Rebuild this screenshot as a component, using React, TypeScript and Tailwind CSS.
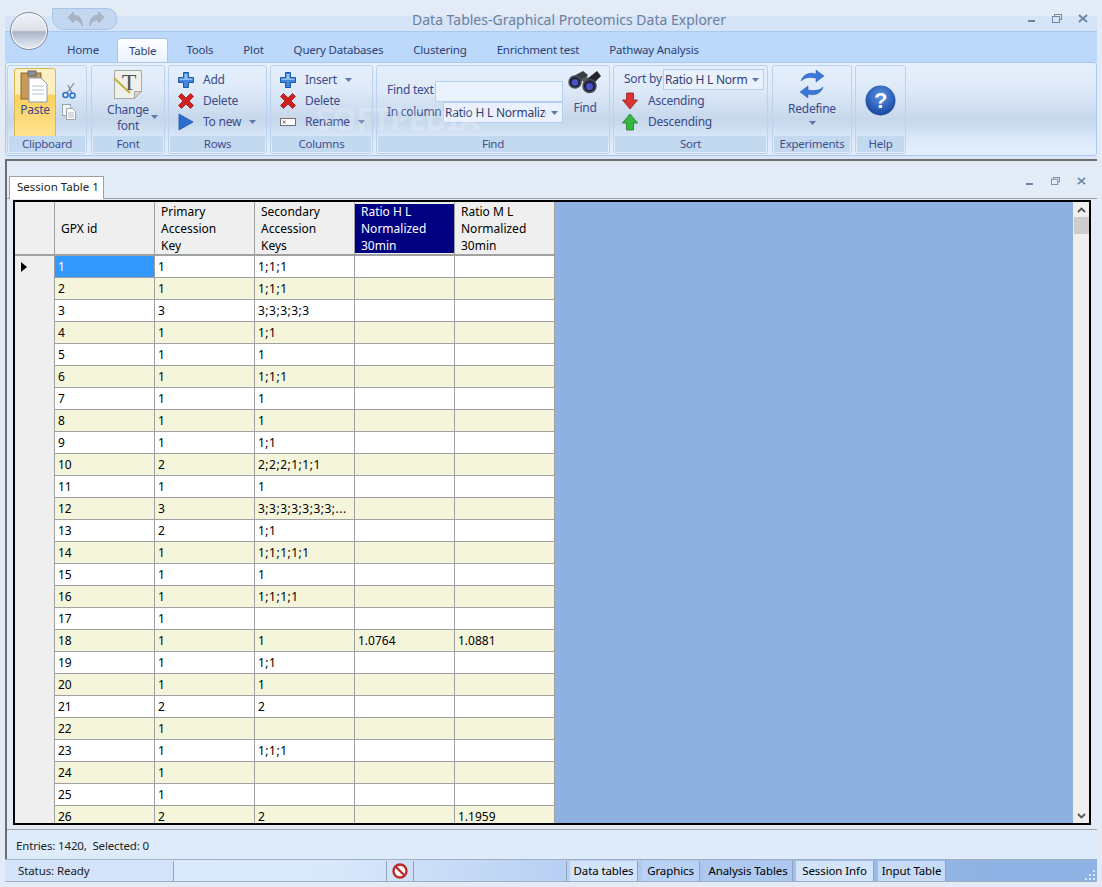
import React from "react";

const rows: [string, string, string, string, string][] = [
  ["1", "1", "1;1;1", "", ""],
  ["2", "1", "1;1;1", "", ""],
  ["3", "3", "3;3;3;3;3", "", ""],
  ["4", "1", "1;1", "", ""],
  ["5", "1", "1", "", ""],
  ["6", "1", "1;1;1", "", ""],
  ["7", "1", "1", "", ""],
  ["8", "1", "1", "", ""],
  ["9", "1", "1;1", "", ""],
  ["10", "2", "2;2;2;1;1;1", "", ""],
  ["11", "1", "1", "", ""],
  ["12", "3", "3;3;3;3;3;3;3;...", "", ""],
  ["13", "2", "1;1", "", ""],
  ["14", "1", "1;1;1;1;1", "", ""],
  ["15", "1", "1", "", ""],
  ["16", "1", "1;1;1;1", "", ""],
  ["17", "1", "", "", ""],
  ["18", "1", "1", "1.0764", "1.0881"],
  ["19", "1", "1;1", "", ""],
  ["20", "1", "1", "", ""],
  ["21", "2", "2", "", ""],
  ["22", "1", "", "", ""],
  ["23", "1", "1;1;1", "", ""],
  ["24", "1", "", "", ""],
  ["25", "1", "", "", ""],
  ["26", "2", "2", "", "1.1959"],
];

const Plus = () => (
  <svg width="18" height="18" viewBox="0 0 18 18" className="shrink-0">
    <path d="M6.5 1.5h5v5h5v5h-5v5h-5v-5h-5v-5h5z" fill="#3f86dc" stroke="#1f57a8" strokeWidth="1" />
    <path d="M7.5 3h3v4.5h5v1.500h-13v-1.500h5z" fill="#8fc0f2" />
  </svg>
);
const Cross = () => (
  <svg width="18" height="18" viewBox="0 0 18 18" className="shrink-0">
    <path d="M1.500 4.500l3-3 4.500 4.500 4.500-4.500 3 3-4.500 4.500 4.500 4.500-3 3-4.500-4.500-4.500 4.500-3-3 4.500-4.500z" fill="#d02020" stroke="#a01818" strokeWidth="0.8" />
  </svg>
);
const Play = () => (
  <svg width="16" height="18" viewBox="0 0 16 18" className="shrink-0">
    <path d="M1 1l14 8-14 8z" fill="#2a6fd0" stroke="#1f57a8" strokeWidth="0.8" />
  </svg>
);
const Rename = () => (
  <svg width="16" height="10" viewBox="0 0 16 10" className="shrink-0">
    <rect x="0.500" y="1.500" width="15" height="7" fill="#fff" stroke="#707070" />
    <path d="M3 3.500l2.500 3M5.500 3.500l-2.500 3" stroke="#444" strokeWidth="0.8" />
  </svg>
);
const ArrowDown = () => (
  <svg width="16" height="18" viewBox="0 0 16 18" className="shrink-0">
    <path d="M4.500 1h7v7h4l-7.500 9-7.500-9h4z" fill="#d83434" stroke="#992020" strokeWidth="0.8" />
  </svg>
);
const ArrowUp = () => (
  <svg width="16" height="18" viewBox="0 0 16 18" className="shrink-0">
    <path d="M4.500 17h7v-7h4l-7.500-9-7.500 9h4z" fill="#35b83f" stroke="#1a7a25" strokeWidth="0.8" />
  </svg>
);
const Caret = () => (
  <svg width="7" height="4" viewBox="0 0 7 4" className="shrink-0">
    <path d="M0 0h7L3.500 4z" fill="#6078a8" />
  </svg>
);

const Group = ({ label, w, children }: { label: string; w: string; children: React.ReactNode }) => (
  <div className={`${w} h-[89px] shrink-0 rounded-[3px] border border-[#bcd2ec] flex flex-col overflow-hidden`}>
    <div className="flex-1 min-h-0 flex">{children}</div>
    <div className="h-[16px] mx-px mb-px bg-[#c3d9f0] flex items-center justify-center text-[#3e4f8e] leading-none text-[11.5px]">
      {label}
    </div>
  </div>
);

const IconRow = ({ icon, text, caret, iconW }: { icon: React.ReactNode; text: string; caret?: boolean; iconW: string }) => (
  <div className="h-[21px] flex items-center">
    <div className={`${iconW} flex items-center justify-center shrink-0`}>{icon}</div>
    <span>{text}</span>
    {caret && <span className="ml-[8px]"><Caret /></span>}
  </div>
);

const Cell = ({ children, w, cls }: { children?: React.ReactNode; w: string; cls?: string }) => (
  <div className={`${w} shrink-0 h-full border-r border-[#a0a0a0] px-[3px] flex items-center whitespace-nowrap overflow-hidden ${cls ?? ""}`}>
    {children}
  </div>
);

const Head = ({ children, w, active }: { children: React.ReactNode; w: string; active?: boolean }) => (
  <div className={`${w} shrink-0 h-full border-r border-[#a0a0a0] flex items-stretch pt-[2px] pb-px`}>
    <div className={`flex-1 flex items-center px-[6px] leading-[17px] ${active ? "bg-[#000080] text-white" : "text-black"}`}>
      <div>{children}</div>
    </div>
  </div>
);

const StatusTab = ({ t, w, bg }: { t: string; w: string; bg: string }) => (
  <div className={`${w} ${bg} h-[20px] border-r border-[#8fa3c0] flex items-center justify-center text-black whitespace-nowrap text-[11.5px] tracking-[-0.1px]`}>
    {t}
  </div>
);

export default function App() {
  return (
    <div className="relative w-[1102px] h-[887px] overflow-hidden bg-[#e3ebf6] flex flex-col text-[12px] font-['Noto_Sans','Open_Sans',sans-serif]">
      {/* title bar */}
      <div className="h-[32px] shrink-0 ml-[5px] mr-[5px] flex flex-col">
        <div className="h-[16px] bg-[#e3ebf6]" />
        <div className="h-[16px] bg-[#d6e4f7] border-b border-[#a9c9f0]" />
      </div>
      <div className="absolute left-[412px] top-[11px] text-[14px] leading-[18px] text-[#6f7f9b]">
        Data Tables-Graphical Proteomics Data Explorer
      </div>
      {/* quick access */}
      <div className="absolute left-[52px] top-[8px] w-[65px] h-[22px] rounded-r-[10px] rounded-bl-[12px] border border-[#a9c4e6] bg-[#c3d7f0] flex items-center pl-[14px] gap-[6px]">
        <svg width="16" height="16" viewBox="0 0 16 16">
          <path d="M1 6.500L6.500 1v3.200C11.500 4 15.500 7 15 15 13.500 10.500 11 8.800 6.500 9v3z" fill="#a9b4c4" stroke="#98a4b6" strokeWidth="0.6" />
        </svg>
        <svg width="16" height="16" viewBox="0 0 16 16">
          <path d="M15 6.500L9.500 1v3.200C4.500 4 .5 7 1 15c1.500-4.500 4-6.200 8.500-6v3z" fill="#a9b4c4" stroke="#98a4b6" strokeWidth="0.6" />
        </svg>
      </div>
      {/* orb */}
      <div className="absolute left-[10px] top-[12px] w-[38px] h-[38px] rounded-full border border-[#7c8a9c] bg-[linear-gradient(180deg,#eef1f5_0%,#dfe3e9_48%,#a9b4c6_52%,#d6dde8_85%,#e6ebf2_100%)] shadow-[inset_0_0_0_1px_#ffffff]" />
      {/* window buttons */}
      <div className="absolute left-[1028px] top-[14px] w-[60px] flex items-center justify-between">
        <div className="w-[7px] h-[2px] bg-[#6e7f99] mt-[5px]" />
        <svg width="10" height="9" viewBox="0 0 10 9">
          <rect x="2.500" y="0.500" width="7" height="5" fill="none" stroke="#7088a8" />
          <rect x="0.500" y="2.500" width="7" height="6" fill="#d6e4f7" stroke="#7088a8" />
        </svg>
        <svg width="10" height="9" viewBox="0 0 11 10">
          <path d="M1 1l9 8M10 1L1 9" stroke="#7088a8" strokeWidth="2.200" />
        </svg>
      </div>
      {/* tabs */}
      <div className="h-[30px] shrink-0 mx-[5px] bg-[#bcd8fb] flex items-end pl-[47px] text-[#2d4273] text-[11.5px] tracking-[-0.2px]">
        {["Home", "Table", "Tools", "Plot", "Query Databases", "Clustering", "Enrichment test", "Pathway Analysis"].map((t) =>
          t === "Table" ? (
            <div key={t} className="h-[24px] mx-[3px] px-[11px] flex items-center rounded-t-[3px] border border-b-0 border-[#a9c6e8] bg-[linear-gradient(180deg,#ffffff,#e8f2fe)]">
              {t}
            </div>
          ) : (
            <div key={t} className="h-[24px] mx-[3px] px-[12px] flex items-center whitespace-nowrap">
              {t}
            </div>
          )
        )}
      </div>
      {/* ribbon */}
      <div className="h-[94px] shrink-0 mx-[5px] rounded-[3px] border border-[#a9c9f0] bg-[linear-gradient(180deg,#e6f0fd_0%,#e0ebfa_25%,#c6d7eb_62%,#dceafb_85%,#e4effd_100%)] flex gap-[3px] px-[1px] pt-[2px] text-[#3a4a8a] tracking-[-0.25px]">
        <Group label="Clipboard" w="w-[80px]">
          <div className="ml-[6px] mt-[2px] w-[42px] h-[70px] rounded-[3px] border border-[#d9b45a] bg-[linear-gradient(180deg,#fdf0c2_0%,#fdeebb_37%,#fcd05e_39%,#fde390_100%)] flex flex-col items-center">
            <svg width="32" height="34" viewBox="0 0 32 34" className="mt-[1px]">
              <rect x="2" y="3" width="20" height="26" fill="#c89a58" stroke="#8a6a38" />
              <rect x="9" y="1" width="8" height="5" fill="#8a8f98" stroke="#666" />
              <path d="M10 8h12l6 6v18H10z" fill="#fff" stroke="#8a9ab0" />
              <path d="M13 16h12M13 20h12M13 24h12" stroke="#b6c3d6" />
            </svg>
            <span className="-mt-[3px] text-[#3a4a8a]">Paste</span>
          </div>
          <div className="flex flex-col items-center ml-[6px] mt-[16px] gap-[5px]">
            <svg width="14" height="17" viewBox="0 0 14 17">
              <path d="M12 1L5 11M6 3l4 8" stroke="#7d8794" strokeWidth="1.200" fill="none" />
              <circle cx="3.500" cy="13" r="2.500" fill="none" stroke="#2a6fd0" strokeWidth="1.500" />
              <circle cx="10.500" cy="13.500" r="2.500" fill="none" stroke="#2a6fd0" strokeWidth="1.500" />
            </svg>
            <svg width="14" height="16" viewBox="0 0 14 16">
              <rect x="0.500" y="0.500" width="8" height="11" fill="#f4f6f8" stroke="#9aa4b0" />
              <path d="M4.500 4.500h6l3 3v8h-9z" fill="#fff" stroke="#9aa4b0" />
              <path d="M6 9h6M6 11h6M6 13h6" stroke="#b0b8c4" />
            </svg>
          </div>
        </Group>
        <div className="ml-px">
          <Group label="Font" w="w-[74px]">
            <div className="flex-1 flex flex-col items-center pt-[3px]">
              <svg width="30" height="31" viewBox="0 0 30 31">
                <path d="M1.500 1.500h27v21l-7 7h-20z" fill="#f0f0ea" stroke="#a8a8a0" />
                <path d="M21.500 29.500v-7h7z" fill="#d8d8d0" stroke="#a8a8a0" />
                <text x="16" y="21" textAnchor="middle" fontFamily="Liberation Serif" fontSize="24" fill="#555">T</text>
                <path d="M1 9l16 15" stroke="#c4b040" strokeWidth="2" />
              </svg>
              <div className="relative text-center leading-[16px] mt-[2px]">
                <div>Change</div>
                <div>font</div>
                <span className="absolute left-[44px] top-[13px]"><Caret /></span>
              </div>
            </div>
          </Group>
        </div>
        <Group label="Rows" w="w-[99px]">
          <div className="pt-[3px]">
            <IconRow iconW="w-[34px]" icon={<Plus />} text="Add" />
            <IconRow iconW="w-[34px]" icon={<Cross />} text="Delete" />
            <IconRow iconW="w-[34px]" icon={<Play />} text="To new" caret />
          </div>
        </Group>
        <Group label="Columns" w="w-[103px]">
          <div className="pt-[3px]">
            <IconRow iconW="w-[34px]" icon={<Plus />} text="Insert" caret />
            <IconRow iconW="w-[34px]" icon={<Cross />} text="Delete" />
            <IconRow iconW="w-[34px]" icon={<Rename />} text="Rename" caret />
          </div>
        </Group>
        <Group label="Find" w="w-[234px]">
          <div className="flex-1 flex pt-[15px] pl-[10px]">
            <div className="w-[176px]">
              <div className="h-[21px] flex items-center">
                <span className="w-[48px] whitespace-nowrap pb-[3px]">Find text</span>
                <div className="w-[128px] h-[21px] bg-[#e9f1fc] border border-[#b6cfee]" />
              </div>
              <div className="h-[21px] flex items-center">
                <span className="w-[56px] whitespace-nowrap pb-[2px]">In column</span>
                <div className="w-[120px] h-[21px] bg-[#e9f1fc] border border-[#b6cfee] flex items-center pl-[1px] pr-[4px] text-[#333e70]">
                  <span className="flex-1 overflow-hidden whitespace-nowrap">Ratio H L Normalized</span>
                  <span className="ml-[5px]"><Caret /></span>
                </div>
              </div>
            </div>
            <div className="flex flex-col items-center w-[40px] -mt-[11px] ml-[2px]">
              <svg width="34" height="24" viewBox="0 0 34 24">
                <path d="M4 7l11-6 5 4-9 9z" fill="#3a3d44" />
                <path d="M19 9l10-8 4 5-9 9z" fill="#24262c" />
                <rect x="14" y="7" width="6" height="4" fill="#55585f" transform="rotate(-25 17 9)" />
                <circle cx="7" cy="12" r="6" fill="#22243c" stroke="#4b4e56" strokeWidth="1.500" />
                <circle cx="21.500" cy="16" r="6.500" fill="#22243c" stroke="#4b4e56" strokeWidth="1.500" />
                <circle cx="7" cy="12.500" r="3.200" fill="#4a50c8" />
                <circle cx="21.500" cy="16.500" r="3.500" fill="#4a50c8" />
              </svg>
              <span className="mt-[5px]">Find</span>
            </div>
          </div>
        </Group>
        <Group label="Sort" w="w-[155px]">
          <div className="flex-1 pt-[3px] pl-[10px]">
            <div className="h-[21px] flex items-center">
              <span className="w-[39px] whitespace-nowrap pb-[2px]">Sort by</span>
              <div className="w-[101px] h-[21px] bg-[#e9f1fc] border border-[#b6cfee] flex items-center pl-[1px] pr-[4px] text-[#333e70]">
                <span className="flex-1 overflow-hidden whitespace-nowrap">Ratio H L Norm</span>
                <span className="ml-[3px]"><Caret /></span>
              </div>
            </div>
            <div className="-ml-[2px]">
              <IconRow iconW="w-[16px] mr-[10px]" icon={<ArrowDown />} text="Ascending" />
              <IconRow iconW="w-[16px] mr-[10px]" icon={<ArrowUp />} text="Descending" />
            </div>
          </div>
        </Group>
        <div className="ml-px">
          <Group label="Experiments" w="w-[80px]">
            <div className="flex-1 flex flex-col items-center pt-[2px]">
              <svg width="26" height="32" viewBox="0 0 26 32">
                <path d="M2 13C4 6 11 4 17 6V2l8 6-8 6v-4C11 9 6 9 2 13z" fill="#3a78d8" stroke="#2458a8" strokeWidth="0.500" />
                <path d="M24 19c-2 7-9 9-15 7v4L1 24l8-6v4c6 1 11 1 15-3z" fill="#3a78d8" stroke="#2458a8" strokeWidth="0.500" />
              </svg>
              <span>Redefine</span>
              <span className="mt-[3px]"><Caret /></span>
            </div>
          </Group>
        </div>
        <Group label="Help" w="w-[51px]">
          <div className="flex-1 flex items-start justify-center pt-[19px]">
            <svg width="31" height="31" viewBox="0 0 31 31">
              <defs>
                <radialGradient id="hg" cx="0.500" cy="0.350" r="0.700">
                  <stop offset="0" stopColor="#5c94e6" />
                  <stop offset="1" stopColor="#123f9a" />
                </radialGradient>
              </defs>
              <circle cx="15.500" cy="15.500" r="15" fill="url(#hg)" />
              <text x="15.500" y="23" textAnchor="middle" fontFamily="Liberation Sans" fontWeight="700" fontSize="22" fill="#fff">?</text>
            </svg>
          </div>
        </Group>
      </div>
      {/* document */}
      <div className="h-[3px] shrink-0 mx-[5px] bg-[#dbe7f8]" />
      <div className="flex-1 min-h-0 ml-[5px] mr-[5px] border-l-2 border-t-2 border-[#6e6e6e] bg-[#deebfb] flex flex-col">
        <div className="h-[669px] shrink-0 bg-[#e3ebf6] border-b border-[#a8a8a8] flex flex-col pb-[4px]">
          {/* doc tab strip */}
          <div className="h-[38px] shrink-0 relative flex items-end pl-[2px] border-b border-[#a0a0a0]">
            <div className="w-[95px] h-[23px] -mb-px bg-white border border-b-0 border-[#a0a0a0] flex items-center pl-[7px] pb-[2px] text-[#222] text-[11.5px]">
              Session Table 1
            </div>
            <div className="absolute right-[11px] top-[16px] w-[60px] flex items-center justify-between">
              <div className="w-[7px] h-[2px] bg-[#7088a8] mt-[5px]" />
              <svg width="9" height="8" viewBox="0 0 10 9">
                <rect x="2.500" y="0.500" width="7" height="5" fill="none" stroke="#7088a8" />
                <rect x="0.500" y="2.500" width="7" height="6" fill="#e3ebf6" stroke="#7088a8" />
              </svg>
              <svg width="9" height="8" viewBox="0 0 11 10">
                <path d="M1 1l9 8M10 1L1 9" stroke="#7088a8" strokeWidth="2.200" />
              </svg>
            </div>
          </div>
          {/* grid */}
          <div className="flex-1 min-h-0 mt-px mx-[6px] w-[1078px] border-2 border-black bg-[#8fb1e2] flex text-black">
            <div className="flex-1 min-w-0 overflow-hidden">
              <div className="w-[540px] h-[54px] bg-[#efefef] border-b-2 border-[#a0a0a0] flex">
                <Head w="w-[40px]">{""}</Head>
                <Head w="w-[100px]">GPX id</Head>
                <Head w="w-[100px]">Primary<br />Accession<br />Key</Head>
                <Head w="w-[100px]">Secondary<br />Accession<br />Keys</Head>
                <Head w="w-[100px]" active>Ratio H L<br />Normalized<br />30min</Head>
                <Head w="w-[100px]">Ratio M L<br />Normalized<br />30min</Head>
              </div>
              {rows.map((r, i) => (
                <div key={r[0]} className={`w-[540px] h-[22px] border-b border-[#a0a0a0] flex ${i % 2 ? "bg-[#f5f5dc]" : "bg-white"}`}>
                  <div className="w-[40px] h-[22px] shrink-0 bg-[#efefef] border-r border-[#a0a0a0] flex items-center pl-[6px] -mb-px">
                    {i === 0 && (
                      <svg width="6" height="10" viewBox="0 0 6 10"><path d="M0 0l6 5-6 5z" fill="#000" /></svg>
                    )}
                  </div>
                  <Cell w="w-[100px]" cls={i === 0 ? "bg-[#3399ff] text-white" : ""}>{r[0]}</Cell>
                  <Cell w="w-[100px]">{r[1]}</Cell>
                  <Cell w="w-[100px]" cls="tracking-[0.5px]">{r[2]}</Cell>
                  <Cell w="w-[100px]">{r[3]}</Cell>
                  <Cell w="w-[100px]">{r[4]}</Cell>
                </div>
              ))}
            </div>
            {/* scrollbar */}
            <div className="w-[16px] shrink-0 bg-[#efefef] flex flex-col items-center pt-[5px]">
              <svg width="9" height="6" viewBox="0 0 9 6" className="shrink-0"><path d="M1 5l3.500-3.500L8 5" fill="none" stroke="#555" strokeWidth="1.800" /></svg>
              <div className="w-[15px] h-[17px] mt-[4px] bg-[#cdcdcd]" />
              <div className="flex-1" />
              <svg width="9" height="6" viewBox="0 0 9 6" className="mb-[4px] shrink-0"><path d="M1 1l3.500 3.500L8 1" fill="none" stroke="#555" strokeWidth="1.800" /></svg>
            </div>
          </div>
        </div>
        <div className="flex-1 flex items-center pl-[9px] pt-[2px] text-[#222] text-[11.5px] tracking-[-0.15px] whitespace-pre">Entries: 1420,  Selected: 0</div>
      </div>
      {/* status bar */}
      <div className="h-[23px] shrink-0 mx-[5px] border-y border-[#a0aec2] bg-[linear-gradient(90deg,#dcebfc_0%,#d9e8fb_30%,#b9d1f3_50%,#8fb2e4_90%)] flex items-center relative">
        <div className="w-[169px] h-[20px] border-r border-[#8fa3c0] bg-[#d3e3f9] flex items-center pl-[13px] text-[#222] text-[11.5px] tracking-[-0.1px]">Status: Ready</div>
        <div className="w-[213px] h-[20px] border-r border-[#8fa3c0]" />
        <div className="w-[27px] h-[20px] border-r border-[#8fa3c0] flex items-center justify-center">
          <svg width="16" height="16" viewBox="0 0 16 16">
            <circle cx="8" cy="8" r="6.500" fill="#fff" stroke="#c02a2a" strokeWidth="2.400" />
            <path d="M3.500 3.500l9 9" stroke="#c02a2a" strokeWidth="2.400" />
          </svg>
        </div>
        <div className="w-[153px] h-[20px] border-r border-[#8fa3c0]" />
        <div className="w-[3px]" />
        <StatusTab t="Data tables" w="w-[68px]" bg="bg-[#d2e3fa]" />
        <div className="w-[4px]" />
        <StatusTab t="Graphics" w="w-[58px]" bg="bg-[#b9d1f5]" />
        <div className="w-[4px]" />
        <StatusTab t="Analysis Tables" w="w-[89px]" bg="bg-[#adc9f0]" />
        <div className="w-[3px]" />
        <StatusTab t="Session Info" w="w-[78px]" bg="bg-[#d2e3fa]" />
        <div className="w-[4px]" />
        <StatusTab t="Input Table" w="w-[68px]" bg="bg-[#c7dbf7]" />
        <svg width="12" height="12" viewBox="0 0 12 12" className="absolute right-[1px] bottom-0">
          <path d="M9 1h2v2H9zM5 5h2v2H5zM9 5h2v2H9zM1 9h2v2H1zM5 9h2v2H5zM9 9h2v2H9z" fill="#dce6f4" />
        </svg>
      </div>
      <div className="h-[5px] shrink-0" />
      {/* watermark */}
      <div className="absolute left-[316px] top-[100px] text-[30px] leading-[38px] font-bold text-white/20 pointer-events-none">SOFTPEDIA</div>
    </div>
  );
}
